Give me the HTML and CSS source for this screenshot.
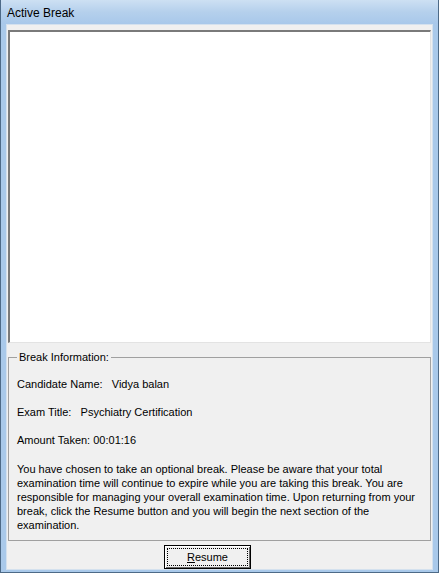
FILE: index.html
```html
<!DOCTYPE html>
<html>
<head>
<meta charset="utf-8">
<link rel="stylesheet" href="styles.css">
</head>
<body>
<div class="window">
  <div class="titlebar">Active Break</div>
  <div class="client">
    <div class="pane"></div>
    <fieldset class="group">
      <legend>Break Information:</legend>
      <p class="row">Candidate Name:&nbsp;&nbsp;&nbsp;Vidya balan</p>
      <p class="row">Exam Title:&nbsp;&nbsp;&nbsp;Psychiatry Certification</p>
      <p class="row">Amount Taken: 00:01:16</p>
      <p class="msg">You have chosen to take an optional break. Please be aware that your total examination time will continue to expire while you are taking this break. You are responsible for managing your overall examination time. Upon returning from your break, click the Resume button and you will begin the next section of the examination.</p>
    </fieldset>
    <div class="actions">
      <button class="btn"><span class="focus"><u>R</u>esume</span></button>
    </div>
  </div>
</div>
</body>
</html>
```
FILE: styles.css
```css
html, body { margin: 0; padding: 0; }
body { width: 439px; height: 573px; overflow: hidden; background: #f0f0f0; }
.window {
  box-sizing: border-box;
  width: 439px; height: 573px;
  display: flex; flex-direction: column;
  background: linear-gradient(to bottom, #bcd5ee 0, #a9c9ea 25px, #a9c9ea 100%);
  border: 1px solid #4d6a87;
  border-top: 0;
  font-family: "Liberation Sans", Arial, sans-serif;
  font-size: 11px;
  color: #000;
}
.titlebar {
  height: 24px;
  padding-left: 6px;
  line-height: 26px;
  font-size: 12px;
  color: #000;
  background: linear-gradient(to bottom, #cde0f3 0%, #b5d0ec 50%, #a8c8ea 100%);
}
.client {
  flex: 1;
  margin: 0 5px 4px 5px;
  background: #f0f0f0;
  padding: 5px 1px 0 1px;
  display: flex; flex-direction: column;
  border: 1px solid #d4e1ee;
}
.pane {
  height: 310px;
  background: #fff;
  border-top: 2px solid #7a7a7a;
  border-left: 2px solid #7a7a7a;
  border-right: 1px solid #e3e3e3;
  border-bottom: 1px solid #e3e3e3;
}
.group {
  margin: 8px 0 0 0;
  padding: 6px 8px 6px 8px;
  border: 1px solid #a0a0a0;
  height: 190px;
  box-sizing: border-box;
}
.group legend {
  padding: 0 2px;
  margin-left: 0;
  font-size: 11px;
}
.row { margin: 9px 0 15px 0; line-height: 13px; }
.msg { margin: 15px 0 0 0; line-height: 14px; }
.actions { display: flex; justify-content: center; padding-top: 4px; padding-right: 24px; }
.btn {
  width: 87px; height: 24px;
  padding: 2px;
  background: #f0f0f0;
  border: 1px solid #000;
  box-shadow: inset 1px 1px 0 #fff, inset -1px -1px 0 #696969;
  font-family: "Liberation Sans", Arial, sans-serif;
  font-size: 11px;
  color: #000;
}
.focus {
  display: flex; align-items: center; justify-content: center;
  height: 100%;
  border: 1px dotted #000;
  box-sizing: border-box;
}
```
